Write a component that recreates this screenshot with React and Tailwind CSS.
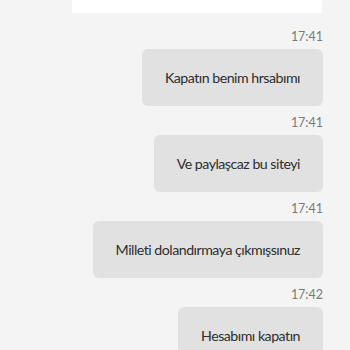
import React from 'react';

const messages = [
  { time: '17:41', text: 'Kapatın benim hrsabımı' },
  { time: '17:41', text: 'Ve paylaşcaz bu siteyi' },
  { time: '17:41', text: 'Milleti dolandırmaya çıkmışsınuz' },
  { time: '17:42', text: 'Hesabımı kapatın' },
];

export default function App() {
  return (
    <div className="h-[350px] overflow-hidden bg-[#f4f4f4] font-['Lato',sans-serif]">
      <div className="ml-[72px] mr-[28px] h-[13px] bg-white" />
      <div className="flex flex-col items-end pr-[27px] pt-[16px]">
        {messages.map((m, i) => (
          <div key={i} className="flex flex-col items-end">
            <span className="text-[12.5px] leading-[16px] text-[#7a7a7a]">{m.time}</span>
            <div className="mt-[4px] mb-[9px] h-[57px] flex items-center rounded-md bg-[#e1e1e1] px-[23px] text-[14.2px] tracking-[-0.5px] text-[#2e2e2e]">
              {m.text}
            </div>
          </div>
        ))}
      </div>
    </div>
  );
}
